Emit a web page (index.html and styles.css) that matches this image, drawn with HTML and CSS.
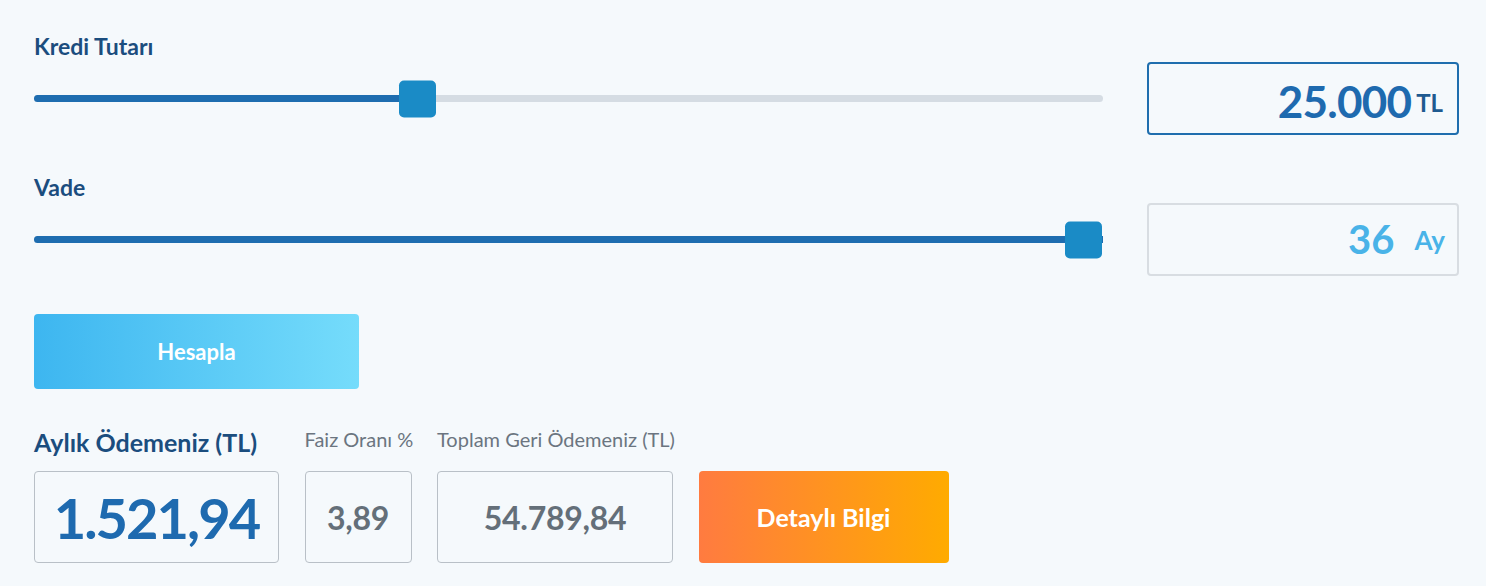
FILE: index.html
```html
<!DOCTYPE html>
<html lang="tr">
<head>
    <meta charset="UTF-8">
    <meta name="viewport" content="width=device-width, initial-scale=1.0">
    <title>Kredi Hesaplama</title>
    <link rel="stylesheet" href="styles.css">
</head>
<body>
    <div class="calc">
        <div class="field">
            <div class="label">Kredi Tutarı</div>
            <div class="field-row">
                <div class="slider">
                    <div class="track">
                        <div class="fill" style="width: 34.2%"></div>
                        <div class="thumb" style="left: 34.2%"></div>
                    </div>
                </div>
                <div class="value-box active">
                    <span class="num">25.000</span><span class="unit unit-tl">TL</span>
                </div>
            </div>
        </div>

        <div class="field field-second">
            <div class="label">Vade</div>
            <div class="field-row">
                <div class="slider">
                    <div class="track">
                        <div class="fill" style="width: 100%"></div>
                        <div class="thumb thumb-end" style="left: 100%"></div>
                    </div>
                </div>
                <div class="value-box light">
                    <span class="num">36</span><span class="unit unit-ay">Ay</span>
                </div>
            </div>
        </div>

        <button class="btn-calc">Hesapla</button>

        <div class="results">
            <div class="res-label main">Aylık Ödemeniz (TL)</div>
            <div class="res-label">Faiz Oranı %</div>
            <div class="res-label">Toplam Geri Ödemeniz (TL)</div>
            <div></div>

            <div class="res-box big">1.521,94</div>
            <div class="res-box">3,89</div>
            <div class="res-box">54.789,84</div>
            <button class="btn-detail">Detaylı Bilgi</button>
        </div>
    </div>
</body>
</html>
```

FILE: styles.css
```css
body {
    margin: 0;
    background-color: #f5f9fc;
    font-family: Lato, "Open Sans", sans-serif;
}
.calc {
    padding: 34px 27px 0 34px;
}
.label {
    font-size: 23px;
    line-height: 24px;
    font-weight: 700;
    color: #1b4d7e;
    margin-bottom: 4px;
}
.field-second {
    margin-top: 40px;
}
.field-row {
    display: flex;
    align-items: center;
    gap: 44px;
}
.slider {
    flex: 1;
    height: 73px;
    display: flex;
    align-items: center;
}
.track {
    position: relative;
    width: 100%;
    height: 7px;
    border-radius: 4px;
    background: #d5dce3;
}
.fill {
    height: 100%;
    border-radius: 4px 0 0 4px;
    background: #1e6db0;
}
.thumb {
    position: absolute;
    top: 50%;
    width: 37px;
    height: 37px;
    margin-left: -1px;
    transform: translateY(-50%);
    border-radius: 5px;
    background: #1a8bc6;
}
.thumb-end {
    margin-left: -38px;
}
.value-box {
    width: 308px;
    height: 69px;
    border: 2px solid #d8dde2;
    border-radius: 4px;
    text-align: right;
    line-height: 69px;
    white-space: nowrap;
}
.value-box.active {
    border-color: #1f6eae;
    line-height: 74px;
}
.value-box .num {
    font-weight: 700;
}
.active .num {
    font-size: 44px;
    letter-spacing: -0.8px;
    color: #1e6aaf;
}
.light .num {
    font-size: 40px;
    color: #49b3e8;
}
.unit {
    display: inline-block;
    font-weight: 700;
}
.unit-tl {
    font-size: 24px;
    color: #1e5a90;
    margin: 0 14px 0 5px;
    vertical-align: 6px;
}
.unit-ay {
    font-size: 26px;
    color: #49b3e8;
    margin: 0 12px 0 20px;
    vertical-align: 4px;
}
.btn-calc {
    display: block;
    margin-top: 38px;
    width: 325px;
    height: 75px;
    border: none;
    border-radius: 4px;
    background: linear-gradient(to right, #3db6f0, #75dcfb);
    color: white;
    font-family: inherit;
    font-size: 22px;
    font-weight: 700;
    cursor: pointer;
}
.results {
    display: grid;
    grid-template-columns: 245px 107px 236px 250px;
    column-gap: 25.5px;
    align-items: end;
    margin-top: 38px;
}
.res-label {
    font-size: 20px;
    line-height: 24px;
    color: #6b7580;
    margin-bottom: 20px;
    white-space: nowrap;
}
.res-label.main {
    font-size: 25px;
    line-height: 30px;
    font-weight: 700;
    color: #1b4d7e;
    margin-bottom: 14px;
}
.res-box {
    height: 90px;
    border: 1px solid #b9c0c7;
    border-radius: 4px;
    display: flex;
    align-items: center;
    justify-content: center;
    font-size: 32px;
    font-weight: 700;
    color: #646f79;
    letter-spacing: -0.3px;
}
.res-box.big {
    font-size: 56px;
    color: #1e6aaf;
    letter-spacing: -2px;
}
.btn-detail {
    height: 92px;
    border: none;
    border-radius: 4px;
    background: linear-gradient(to right, #ff7b40, #ffab00);
    color: white;
    font-family: inherit;
    font-size: 25px;
    font-weight: 700;
    cursor: pointer;
}
```
